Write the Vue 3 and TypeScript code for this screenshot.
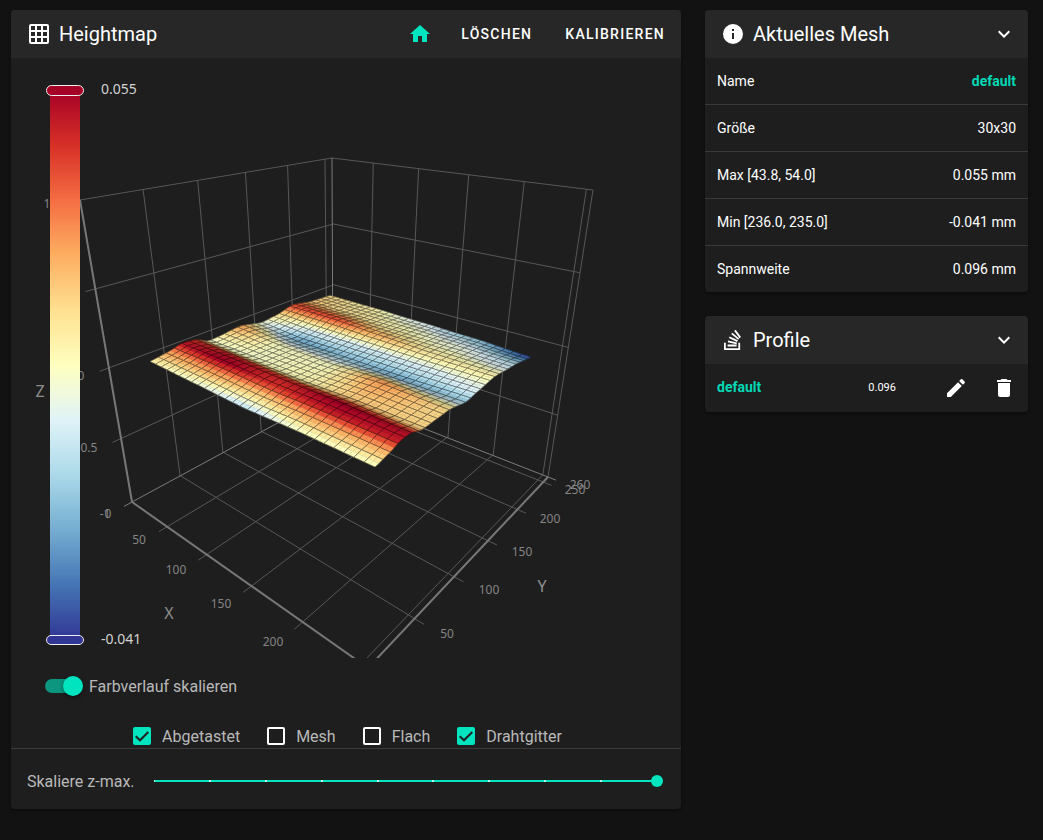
<script setup lang="ts">
import { ref } from 'vue'

type Point = [number, number]
type Projector = (x: number, y: number) => Point
interface Line { x1: number; y1: number; x2: number; y2: number }
interface Cell { fill: string; points: string }
interface MeshCell { parts: Cell[]; outline: string }

const icons = {
  grid: 'M10,4V8H14V4H10M16,4V8H20V4H16M16,10V14H20V10H16M16,16V20H20V16H16M14,20V16H10V20H14M8,20V16H4V20H8M8,14V10H4V14H8M8,8V4H4V8H8M10,14H14V10H10V14M4,2H20A2,2 0 0,1 22,4V20A2,2 0 0,1 20,22H4C2.92,22 2,21.1 2,20V4A2,2 0 0,1 4,2Z',
  home: 'M10,20V14H14V20H19V12H22L12,3L2,12H5V20H10Z',
  info: 'M13,9H11V7H13M13,17H11V11H13M12,2A10,10 0 0,0 2,12A10,10 0 0,0 12,22A10,10 0 0,0 22,12A10,10 0 0,0 12,2Z',
  chevron: 'M7.41,8.58L12,13.17L16.59,8.58L18,10L12,16L6,10L7.41,8.58Z',
  stack: 'M17.36,20.2V14.82H19.15V22H3V14.82H4.8V20.2H17.36M6.77,14.32L7.14,12.56L15.93,14.41L15.56,16.17L6.77,14.32M7.93,10.11L8.69,8.5L16.83,12.28L16.07,13.9L7.93,10.11M10.19,6.12L11.34,4.74L18.24,10.5L17.09,11.87L10.19,6.12M14.64,1.87L20,9.08L18.56,10.15L13.2,2.94L14.64,1.87M6.59,18.41V16.61H15.57V18.41H6.59Z',
  pencil: 'M20.71,7.04C21.1,6.65 21.1,6 20.71,5.63L18.37,3.29C18,2.9 17.35,2.9 16.96,3.29L15.12,5.12L18.87,8.87M3,17.25V21H6.75L17.81,9.93L14.06,6.18L3,17.25Z',
  trash: 'M19,4H15.5L14.5,3H9.5L8.5,4H5V6H19M6,19A2,2 0 0,0 8,21H16A2,2 0 0,0 18,19V7H6V19Z',
}

const meshInfo = [
  { label: 'Name', value: 'default', active: true },
  { label: 'Größe', value: '30x30' },
  { label: 'Max [43.8, 54.0]', value: '0.055 mm' },
  { label: 'Min [236.0, 235.0]', value: '-0.041 mm' },
  { label: 'Spannweite', value: '0.096 mm' },
]

const scaleGradient = ref(true)
const zMax = ref(9)
const layers = ref([
  { label: 'Abgetastet', on: true },
  { label: 'Mesh', on: false },
  { label: 'Flach', on: false },
  { label: 'Drahtgitter', on: true },
])

const palette = ['#313695', '#4575b4', '#74add1', '#abd9e9', '#e0f3f8', '#ffffbf', '#fee090', '#fdae61', '#f46d43', '#d73027', '#a50026']
const gradientStops = [...palette].reverse()

/* Perspective mapping of the unit square to four corners: 00, 10, 11, 01 */
function quad(a: Point, b: Point, c: Point, d: Point): Projector {
  const sx = a[0] - b[0] + c[0] - d[0]
  const sy = a[1] - b[1] + c[1] - d[1]
  const dx1 = b[0] - c[0], dx2 = d[0] - c[0]
  const dy1 = b[1] - c[1], dy2 = d[1] - c[1]
  const det = dx1 * dy2 - dx2 * dy1
  const g = (sx * dy2 - dx2 * sy) / det
  const h = (dx1 * sy - sx * dy1) / det
  return (x, y) => {
    const w = 1 + g * x + h * y
    return [
      (a[0] + (b[0] * (1 + g) - a[0]) * x + (d[0] * (1 + h) - a[0]) * y) / w,
      (a[1] + (b[1] * (1 + g) - a[1]) * x + (d[1] * (1 + h) - a[1]) * y) / w,
    ]
  }
}

const bottomLeft: Point = [121, 444]
const bottomFront: Point = [357, 610]
const bottomRight: Point = [537, 419]
const bottomBack: Point = [322, 335]
const topLeft: Point = [69, 142]
const topBack: Point = [321, 100]
const topRight: Point = [582, 132]

const floor = quad(bottomLeft, bottomFront, bottomRight, bottomBack)
const leftWall = quad(bottomLeft, bottomBack, topBack, topLeft)
const rightWall = quad(bottomBack, bottomRight, topRight, topBack)

function line(p: Projector, x1: number, y1: number, x2: number, y2: number): Line {
  const [a, b] = p(x1, y1)
  const [c, d] = p(x2, y2)
  return { x1: a, y1: b, x2: c, y2: d }
}

const gridLines: Line[] = []
for (const v of [50, 100, 150, 200, 250]) {
  gridLines.push(line(floor, v / 255, -0.03, v / 255, 1))
  gridLines.push(line(floor, 0, v / 260, 1.03, v / 260))
  gridLines.push(line(leftWall, v / 260, 0, v / 260, 1))
  gridLines.push(line(rightWall, v / 255, 0, v / 255, 1))
}
for (const z of [0.25, 0.5, 0.75, 1]) {
  gridLines.push(line(leftWall, -0.03, z, 1, z))
  gridLines.push(line(rightWall, 0, z, 1, z))
}
gridLines.push(line(rightWall, 1, 0, 1, 1))

const edgeLines: Line[] = [
  line(leftWall, -0.03, 0, 1, 0),
  line(rightWall, 0, 0, 1.03, 0),
  line(leftWall, 1, 0, 1, 1),
]
const axisLines: Line[] = [
  line(floor, 0, 0, 1, 0),
  line(floor, 1, 0, 1, 1),
  line(leftWall, 0, 0, 0, 1),
]

const tickLabels = [
  { x: 36, y: 150, text: '1' },
  { x: 55, y: 241, text: '0.5' },
  { x: 70, y: 322, text: '0' },
  { x: 76, y: 394, text: '-0.5' },
  { x: 94, y: 460, text: '-1' },
  { x: 97, y: 460, text: '0' },
  { x: 128, y: 486, text: '50' },
  { x: 165, y: 516, text: '100' },
  { x: 210, y: 550, text: '150' },
  { x: 262, y: 588, text: '200' },
  { x: 436, y: 580, text: '50' },
  { x: 478, y: 536, text: '100' },
  { x: 511, y: 498, text: '150' },
  { x: 539, y: 465, text: '200' },
  { x: 564, y: 436, text: '250' },
  { x: 569, y: 431, text: '260' },
]
const axisNames = [
  { x: 29, y: 339, text: 'Z' },
  { x: 158, y: 561, text: 'X' },
  { x: 531, y: 534, text: 'Y' },
]

/* Probed heights in thousandths of a millimetre */
const probeX = [0, 0.25, 0.5, 0.75, 1]
const probeY = [0, 0.07, 0.14, 0.19, 0.27, 0.43, 0.55, 0.63, 0.74, 0.87, 1]
const heights = [
  [10, 3, -7, 5, 6],
  [26, 26, 18, 26, 24],
  [51, 55, 46, 52, 51],
  [46, 50, 48, 55, 52],
  [5, 5, 8, 20, 18],
  [27, 6, 6, 28, 17],
  [1, -21, -17, -20, -14],
  [12, -3, -7, -6, -2],
  [41, 40, 24, 12, 10],
  [20, 14, 8, 2, -8],
  [16, 10, -1, -14, -37],
]

function locate(stops: number[], v: number): [number, number] {
  let i = 0
  while (i < stops.length - 2 && v > stops[i + 1]) i++
  const t = Math.min(1, Math.max(0, (v - stops[i]) / (stops[i + 1] - stops[i])))
  return [i, t * t * (3 - 2 * t) * 0.6 + t * 0.4]
}

/* The ridges run slightly askew to the X axis, hence the shift with x */
function height(x: number, y: number): number {
  const [i, s] = locate(probeX, x)
  const [j, t] = locate(probeY, y + 0.06 * x * Math.sin(Math.PI * Math.min(1, Math.max(0, y))))
  const low = heights[j][i] * (1 - s) + heights[j][i + 1] * s
  const high = heights[j + 1][i] * (1 - s) + heights[j + 1][i + 1] * s
  return low * (1 - t) + high * t
}

const channels = palette.map((c) => [1, 3, 5].map((k) => parseInt(c.slice(k, k + 2), 16)))

function color(z: number, light: number): string {
  const v = Math.min(0.9999, Math.max(0, (z + 41) / 96)) * 10
  const i = Math.floor(v)
  const rgb = channels[i].map((c, k) => Math.min(255, Math.round((c + (channels[i + 1][k] - c) * (v - i)) * light)))
  return `rgb(${rgb.join(',')})`
}

const base = quad([139, 305], [364, 410], [520, 293], [319, 240])

function vertex(x: number, y: number): string {
  const [u, v] = base(x, y)
  return `${u.toFixed(1)},${(v - height(x, y) * 0.16).toFixed(1)}`
}

function square(x: number, y: number, s: number): string {
  return [vertex(x, y), vertex(x + s, y), vertex(x + s, y + s), vertex(x, y + s)].join(' ')
}

const cells = 29
const surface: MeshCell[] = []
for (let row = cells - 1; row >= 0; row--) {
  for (let col = 0; col < cells; col++) {
    const x = col / cells
    const y = row / cells
    const half = 0.5 / cells
    const parts: Cell[] = []
    for (const [dx, dy] of [[0, half], [half, half], [0, 0], [half, 0]]) {
      const cx = x + dx + half / 2
      const cy = y + dy + half / 2
      const slope = (height(cx, cy + 0.02) - height(cx, cy - 0.02)) / 0.04
      const light = Math.min(1, Math.max(0.76, 0.97 + slope * 0.0005))
      parts.push({ fill: color(height(cx, cy), light), points: square(x + dx, y + dy, half) })
    }
    surface.push({ parts, outline: square(x, y, 1 / cells) })
  }
}
</script>

<template>
  <main class="page">
    <section class="card heightmap">
      <header class="card-header">
        <svg class="icon" viewBox="0 0 24 24" aria-hidden="true"><path :d="icons.grid" /></svg>
        <h1 class="title">Heightmap</h1>
        <button class="icon-button accent" type="button" aria-label="Home">
          <svg class="icon" viewBox="0 0 24 24" aria-hidden="true"><path :d="icons.home" /></svg>
        </button>
        <button class="text-button" type="button">Löschen</button>
        <button class="text-button" type="button">Kalibrieren</button>
      </header>

      <svg class="chart" viewBox="0 0 670 600" role="img" aria-label="Heightmap">
        <defs>
          <linearGradient id="heat" x1="0" y1="0" x2="0" y2="1">
            <stop v-for="(c, i) in gradientStops" :key="c" :offset="i / 10" :stop-color="c" />
          </linearGradient>
        </defs>
        <g class="grid-lines">
          <line v-for="(l, i) in gridLines" :key="i" v-bind="l" />
        </g>
        <g class="edge-lines">
          <line v-for="(l, i) in edgeLines" :key="i" v-bind="l" />
        </g>
        <g class="axis-lines">
          <line v-for="(l, i) in axisLines" :key="i" v-bind="l" />
        </g>
        <g v-for="(cell, i) in surface" :key="i">
          <polygon v-for="(p, k) in cell.parts" :key="k" :points="p.points" :fill="p.fill" :stroke="p.fill" stroke-width="0.4" />
          <polygon class="wire" :points="cell.outline" />
        </g>
        <g class="tick-labels">
          <text v-for="(t, i) in tickLabels" :key="i" :x="t.x" :y="t.y">{{ t.text }}</text>
        </g>
        <g class="axis-names">
          <text v-for="t in axisNames" :key="t.text" :x="t.x" :y="t.y">{{ t.text }}</text>
        </g>
        <rect x="39" y="32" width="30" height="550" fill="url(#heat)" />
        <rect class="handle" x="35.5" y="27.5" width="37" height="10" rx="5" fill="#a50026" />
        <rect class="handle" x="35.5" y="577.5" width="37" height="9" rx="4.5" fill="#313695" />
        <g class="range-labels">
          <text x="90" y="36">0.055</text>
          <text x="90" y="586">-0.041</text>
        </g>
      </svg>

      <label class="switch-row">
        <input v-model="scaleGradient" class="switch" type="checkbox" role="switch" />
        <span class="caption">Farbverlauf skalieren</span>
      </label>

      <div class="layers">
        <label v-for="layer in layers" :key="layer.label" class="layer">
          <span class="box">
            <input v-model="layer.on" type="checkbox" />
            <svg v-if="layer.on" viewBox="0 0 18 18" aria-hidden="true"><path d="M2.7 9.3 7 13.3 15.3 5" /></svg>
          </span>
          <span class="caption">{{ layer.label }}</span>
        </label>
      </div>

      <footer class="scale">
        <label for="zmax">Skaliere z-max.</label>
        <input id="zmax" v-model="zMax" class="slider" type="range" min="0" max="9" step="1" />
      </footer>
    </section>

    <aside class="side">
      <section class="card">
        <header class="card-header">
          <svg class="icon" viewBox="0 0 24 24" aria-hidden="true"><path :d="icons.info" /></svg>
          <h2 class="title">Aktuelles Mesh</h2>
          <button class="icon-button" type="button" aria-label="Aktuelles Mesh einklappen">
            <svg class="icon" viewBox="0 0 24 24" aria-hidden="true"><path :d="icons.chevron" /></svg>
          </button>
        </header>
        <table class="info">
          <tbody>
            <tr v-for="row in meshInfo" :key="row.label">
              <th scope="row">{{ row.label }}</th>
              <td :class="{ active: row.active }">{{ row.value }}</td>
            </tr>
          </tbody>
        </table>
      </section>

      <section class="card">
        <header class="card-header">
          <svg class="icon" viewBox="0 0 24 24" aria-hidden="true"><path :d="icons.stack" /></svg>
          <h2 class="title">Profile</h2>
          <button class="icon-button" type="button" aria-label="Profile einklappen">
            <svg class="icon" viewBox="0 0 24 24" aria-hidden="true"><path :d="icons.chevron" /></svg>
          </button>
        </header>
        <div class="profile">
          <span class="profile-name active">default</span>
          <span class="profile-value">0.096</span>
          <button class="icon-button" type="button" aria-label="Profil umbenennen">
            <svg class="icon" viewBox="0 0 24 24" aria-hidden="true"><path :d="icons.pencil" /></svg>
          </button>
          <button class="icon-button" type="button" aria-label="Profil löschen">
            <svg class="icon" viewBox="0 0 24 24" aria-hidden="true"><path :d="icons.trash" /></svg>
          </button>
        </div>
      </section>
    </aside>
  </main>
</template>

<style>
body {
  margin: 0;
  background: #121212;
}
</style>

<style scoped>
.page {
  display: grid;
  grid-template-columns: repeat(12, minmax(0, 1fr));
  gap: 24px;
  align-items: start;
  padding: 10px 15px 24px 11px;
  color: #fff;
  font-family: Roboto, sans-serif;
  font-size: 16px;
  line-height: 24px;
}
.heightmap {
  grid-column: span 8;
}
.side {
  grid-column: span 4;
  display: grid;
  gap: 24px;
}
.card {
  overflow: hidden;
  border-radius: 4px;
  background: #1e1e1e;
  box-shadow: 0 2px 3px rgba(0, 0, 0, 0.35);
}
.card-header {
  display: flex;
  align-items: center;
  gap: 1px;
  height: 48px;
  padding-left: 16px;
  background: #272727;
}
.icon {
  display: block;
  flex: none;
  width: 24px;
  height: 24px;
  fill: currentColor;
}
.title {
  flex: 1;
  margin: 0 0 0 7px;
  font-size: 20px;
  font-weight: 400;
}
button {
  border: 0;
  background: none;
  color: #fff;
  font-family: inherit;
  cursor: pointer;
}
.icon-button {
  display: grid;
  place-items: center;
  flex: none;
  width: 48px;
  height: 48px;
  padding: 0;
}
.icon-button.accent {
  color: #00e5c0;
}
.text-button {
  height: 48px;
  padding: 0 16px;
  font-size: 14px;
  font-weight: 500;
  letter-spacing: 0.09em;
  text-transform: uppercase;
}
.chart {
  display: block;
  width: 100%;
  height: auto;
  font-family: "Noto Sans", sans-serif;
}
.grid-lines {
  stroke: #585858;
}
.edge-lines {
  stroke: #7c7c7c;
}
.axis-lines {
  stroke: #777;
  stroke-width: 2;
}
.wire {
  fill: none;
  stroke: rgba(0, 0, 0, 0.36);
  stroke-width: 1;
}
.tick-labels {
  fill: #858585;
  font-size: 12px;
  text-anchor: middle;
}
.axis-names {
  fill: #8e8e8e;
  font-size: 16px;
  text-anchor: middle;
}
.range-labels {
  fill: #d2d2d2;
  font-size: 14px;
}
.handle {
  stroke: #eee;
}
.caption {
  padding-top: 2px;
}
.switch-row {
  display: flex;
  align-items: center;
  width: max-content;
  height: 56px;
  margin-left: 34px;
  gap: 8px;
  color: #b9b9b9;
}
.switch {
  position: relative;
  appearance: none;
  width: 36px;
  height: 14px;
  margin: 0;
  border-radius: 7px;
  background: #555;
}
.switch:checked {
  background: #0c957f;
}
.switch::before {
  content: '';
  position: absolute;
  top: -3px;
  left: -2px;
  width: 20px;
  height: 20px;
  border-radius: 50%;
  background: #ccc;
  box-shadow: 0 2px 4px rgba(0, 0, 0, 0.4);
}
.switch:checked::before {
  left: 18px;
  background: #00e5c0;
}
.layers {
  display: flex;
  justify-content: center;
  gap: 24px;
  height: 24px;
  margin-top: 10px;
  color: #b9b9b9;
}
.layer {
  display: flex;
  align-items: center;
  gap: 8px;
}
.box {
  position: relative;
  width: 18px;
  height: 18px;
  margin: 3px;
}
.box input {
  display: block;
  appearance: none;
  width: 18px;
  height: 18px;
  margin: 0;
  border: 2px solid #fff;
  border-radius: 2px;
}
.box input:checked {
  border-color: #00e5c0;
  background: #00e5c0;
}
.box svg {
  position: absolute;
  inset: 0;
  fill: none;
  stroke: #1e1e1e;
  stroke-width: 2;
  pointer-events: none;
}
.scale {
  display: flex;
  align-items: center;
  gap: 13px;
  height: 60px;
  padding: 0 18px 0 16px;
  border-top: 1px solid #3a3a3a;
  color: #b9b9b9;
}
.scale label {
  padding-top: 6px;
}
.slider {
  appearance: none;
  flex: 1;
  min-width: 0;
  height: 12px;
  margin: 4px 0 0;
  background: none;
}
.slider::-webkit-slider-runnable-track {
  height: 12px;
  background:
    repeating-linear-gradient(90deg, #b8f5ea 0 1px, #00e5c0 1px calc(100% / 9 - 1px), #b8f5ea calc(100% / 9 - 1px) calc(100% / 9)) 6px 5px / calc(100% - 12px) 2px no-repeat;
}
.slider::-webkit-slider-thumb {
  appearance: none;
  width: 12px;
  height: 12px;
  border-radius: 50%;
  background: #00e5c0;
}
.info {
  width: 100%;
  border-collapse: collapse;
  font-size: 14px;
}
.info tr + tr {
  border-top: 1px solid #3a3a3a;
}
.info th,
.info td {
  height: 46px;
  padding: 0 12px;
  font-weight: 400;
  text-align: left;
}
.info td {
  text-align: right;
}
.info td.active,
.active {
  color: #00d8b5;
  font-weight: 700;
}
.profile {
  display: flex;
  align-items: center;
  height: 48px;
  padding-left: 12px;
  font-size: 14px;
}
.profile-name {
  flex: 1;
  padding-bottom: 2px;
}
.profile-value {
  margin-right: 36px;
  font-size: 11px;
}
</style>
